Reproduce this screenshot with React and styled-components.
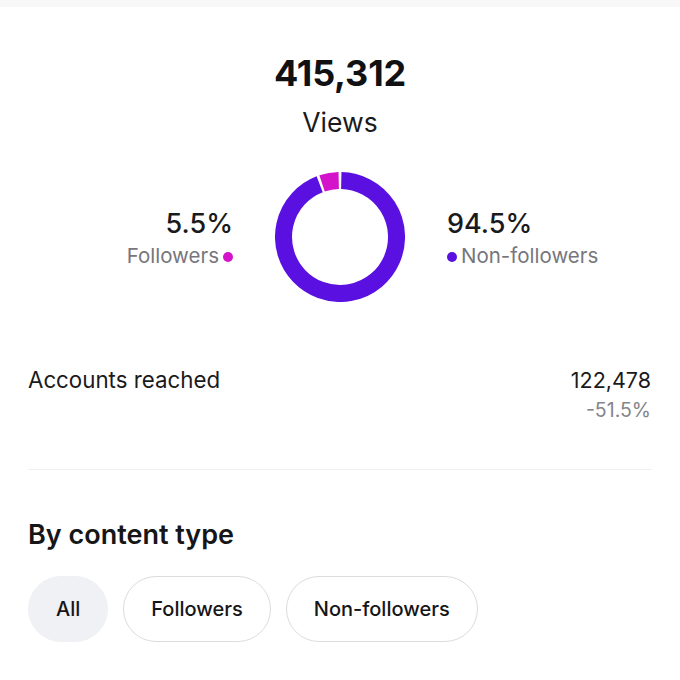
import React from "react";
import styled, { createGlobalStyle } from "styled-components";

const Global = createGlobalStyle`
  html, body { margin: 0; padding: 0; background: #ffffff; }
  body { font-family: Inter, "Noto Sans", sans-serif; color: #161618; -webkit-font-smoothing: antialiased; }
`;

const Page = styled.div`
  width: 680px;
  min-height: 680px;
  background: #fff;
  display: flex;
  flex-direction: column;
`;

const TopBand = styled.div`
  height: 7px;
  background: #f8f8f8;
`;

const Summary = styled.section`
  display: flex;
  flex-direction: column;
  align-items: center;
  padding-top: 44px;
`;

const Total = styled.div`
  font-size: 36px;
  line-height: 44px;
  font-weight: 700;
  letter-spacing: -0.2px;
  color: #111113;
`;

const TotalLabel = styled.div`
  margin-top: 11px;
  font-size: 26.5px;
  line-height: 32px;
  font-weight: 400;
  color: #1a1a1c;
`;

const ChartRow = styled.div`
  margin-top: 34px;
  width: 100%;
  display: grid;
  grid-template-columns: 1fr 130px 1fr;
  column-gap: 42px;
  align-items: center;
`;

const Legend = styled.div`
  display: flex;
  flex-direction: column;
  gap: 4px;
  align-items: ${(p) => (p.$side === "left" ? "flex-end" : "flex-start")};
  padding-top: 2px;
`;

const Percent = styled.div`
  font-size: 27px;
  line-height: 32px;
  font-weight: 500;
  color: #1a1a1c;
`;

const LegendLabel = styled.div`
  display: flex;
  align-items: center;
  gap: 4px;
  font-size: 20.5px;
  line-height: 24px;
  color: #76767c;
`;

const Dot = styled.span`
  width: 10px;
  height: 10px;
  border-radius: 50%;
  background: ${(p) => p.$color};
  margin-top: 2px;
`;

const Details = styled.section`
  padding: 0 28px;
  display: flex;
  flex-direction: column;
`;

const MetricRow = styled.div`
  margin-top: 64px;
  display: flex;
  justify-content: space-between;
  align-items: flex-start;
`;

const MetricLabel = styled.div`
  font-size: 22.3px;
  line-height: 28px;
  color: #1a1a1c;
`;

const MetricValues = styled.div`
  display: flex;
  flex-direction: column;
  align-items: flex-end;
  gap: 4px;
  padding-right: 1px;
`;

const MetricValue = styled.div`
  font-size: 21.5px;
  line-height: 28px;
  color: #1a1a1c;
`;

const MetricChange = styled.div`
  font-size: 19.5px;
  line-height: 24px;
  color: #85858b;
`;

const Divider = styled.hr`
  margin: 47px 0 0;
  border: 0;
  height: 1px;
  background: #f0f0f0;
`;

const SectionTitle = styled.h2`
  margin: 49px 0 0;
  font-size: 27px;
  line-height: 32px;
  font-weight: 600;
  color: #161618;
`;

const Chips = styled.div`
  margin-top: 25px;
  display: flex;
  gap: 15px;
`;

const Chip = styled.button`
  height: 66px;
  padding: 0 27px;
  border-radius: 33px;
  border: 1.5px solid ${(p) => (p.$active ? "#f0f1f4" : "#dcdcdc")};
  background: ${(p) => (p.$active ? "#f0f1f4" : "#ffffff")};
  font-family: Inter, "Noto Sans", sans-serif;
  font-size: 20px;
  font-weight: 500;
  color: #161618;
  cursor: pointer;
`;

function polar(c, r, deg) {
  const a = (deg * Math.PI) / 180;
  return [c + r * Math.sin(a), c - r * Math.cos(a)];
}

function arcPath(c, r, start, end) {
  const [x1, y1] = polar(c, r, start);
  const [x2, y2] = polar(c, r, end);
  const large = end - start > 180 ? 1 : 0;
  return `M ${x1.toFixed(2)} ${y1.toFixed(2)} A ${r} ${r} 0 ${large} 1 ${x2.toFixed(2)} ${y2.toFixed(2)}`;
}

function Donut({ share }) {
  const c = 65;
  const r = 56.5;
  const sweep = share * 3.6;
  const gap = 1.3;
  return (
    <svg width="130" height="130" viewBox="0 0 130 130">
      <path d={arcPath(c, r, gap, 360 - sweep - gap)} fill="none" stroke="#5a10e0" strokeWidth="17" />
      <path d={arcPath(c, r, -sweep + gap, -gap)} fill="none" stroke="#d312c9" strokeWidth="17" />
    </svg>
  );
}

export default function App() {
  return (
    <Page>
      <Global />
      <TopBand />
      <Summary>
        <Total>415,312</Total>
        <TotalLabel>Views</TotalLabel>
        <ChartRow>
          <Legend $side="left">
            <Percent>5.5%</Percent>
            <LegendLabel>
              Followers
              <Dot $color="#d312c9" />
            </LegendLabel>
          </Legend>
          <Donut share={5.5} />
          <Legend $side="right">
            <Percent>94.5%</Percent>
            <LegendLabel>
              <Dot $color="#5a10e0" />
              Non-followers
            </LegendLabel>
          </Legend>
        </ChartRow>
      </Summary>
      <Details>
        <MetricRow>
          <MetricLabel>Accounts reached</MetricLabel>
          <MetricValues>
            <MetricValue>122,478</MetricValue>
            <MetricChange>-51.5%</MetricChange>
          </MetricValues>
        </MetricRow>
        <Divider />
        <SectionTitle>By content type</SectionTitle>
        <Chips>
          <Chip $active>All</Chip>
          <Chip>Followers</Chip>
          <Chip>Non-followers</Chip>
        </Chips>
      </Details>
    </Page>
  );
}
